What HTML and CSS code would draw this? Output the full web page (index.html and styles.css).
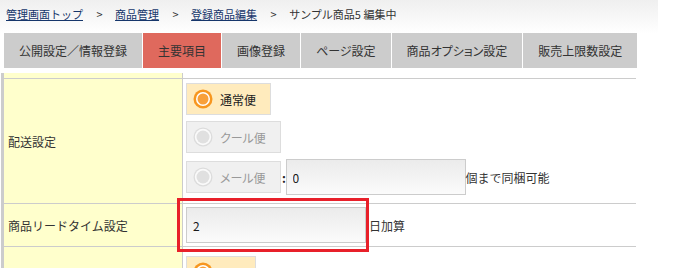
FILE: index.html
```html
<!DOCTYPE html>
<html lang="ja">
<head>
    <meta charset="UTF-8">
    <title>商品編集</title>
    <link rel="stylesheet" href="styles.css">
</head>
<body>
    <div class="page">
        <div class="crumbs">
            <a href="#">管理画面トップ</a>
            <span class="sep">&gt;</span>
            <a href="#">商品管理</a>
            <span class="sep">&gt;</span>
            <a href="#">登録商品編集</a>
            <span class="sep">&gt;</span>
            <span>サンプル商品5 編集中</span>
        </div>

        <ul class="tabs">
            <li>公開設定／情報登録</li>
            <li class="active">主要項目</li>
            <li>画像登録</li>
            <li>ページ設定</li>
            <li>商品オプション設定</li>
            <li>販売上限数設定</li>
        </ul>

        <table class="form">
            <tr class="spacer">
                <th></th>
                <td></td>
            </tr>
            <tr>
                <th>配送設定</th>
                <td class="ship">
                    <div class="line">
                        <label class="radio on">
                            <svg width="20" height="20" viewBox="0 0 20 20"><circle cx="10" cy="10" r="9.5" fill="#f7961f"/><circle cx="10" cy="10" r="7" fill="#fff"/><circle cx="10" cy="10" r="5.5" fill="#f8a03a"/></svg>
                            通常便
                        </label>
                    </div>
                    <div class="line">
                        <label class="radio off">
                            <svg width="20" height="20" viewBox="0 0 20 20"><circle cx="10" cy="10" r="9.5" fill="#dcdcdc"/><circle cx="10" cy="10" r="8.2" fill="#fafafa"/><circle cx="10" cy="10" r="6.5" fill="#e0e0e0"/></svg>
                            クール便
                        </label>
                    </div>
                    <div class="line">
                        <label class="radio off">
                            <svg width="20" height="20" viewBox="0 0 20 20"><circle cx="10" cy="10" r="9.5" fill="#dcdcdc"/><circle cx="10" cy="10" r="8.2" fill="#fafafa"/><circle cx="10" cy="10" r="6.5" fill="#e0e0e0"/></svg>
                            メール便
                        </label>
                        <span class="colon">:</span>
                        <input type="text" class="text count" value="0">
                        <span class="unit">個まで同梱可能</span>
                    </div>
                </td>
            </tr>
            <tr>
                <th>商品リードタイム設定</th>
                <td class="lead">
                    <div class="line">
                        <span class="mark"><input type="text" class="text" value="2"></span>
                        <span class="unit days">日加算</span>
                    </div>
                </td>
            </tr>
            <tr>
                <th></th>
                <td class="next">
                    <label class="radio on stub">
                        <svg width="20" height="20" viewBox="0 0 20 20"><circle cx="10" cy="10" r="9.5" fill="#f7961f"/><circle cx="10" cy="10" r="7" fill="#fff"/><circle cx="10" cy="10" r="5.5" fill="#f8a03a"/></svg>
                    </label>
                </td>
            </tr>
        </table>
    </div>
</body>
</html>
```

FILE: styles.css
```css
html, body {
    margin: 0;
    padding: 0;
    overflow: hidden;
    height: 268px;
}
body {
    font-family: "Noto Sans CJK JP", "Liberation Sans", sans-serif;
    font-size: 12px;
    color: #333;
    background: #fff;
}
.page {
    width: 658px;
    background: linear-gradient(#efefef, #fff 33px);
}
.crumbs {
    height: 29px;
    line-height: 28px;
    padding-left: 6px;
    font-size: 11px;
    color: #333;
    white-space: nowrap;
}
.crumbs a {
    color: #16366b;
    text-decoration: underline;
}
.crumbs .sep {
    margin: 0 10px 0 11px;
}
.tabs {
    display: flex;
    gap: 1px;
    list-style: none;
    margin: 4px 0 5px 4px;
    padding: 0;
}
.tabs li {
    height: 35px;
    line-height: 35px;
    padding: 0 15px;
    background: #ccc;
    color: #333;
    font-size: 12px;
    font-feature-settings: "palt";
    white-space: nowrap;
}
.tabs li.active {
    background: #df695d;
}
.form {
    width: 635px;
    margin-left: 1px;
    border-collapse: collapse;
    border-left: 3px solid #ccc;
}
.form th, .form td {
    border-bottom: 1px solid #ccc;
    padding: 0;
    vertical-align: middle;
}
.form th {
    width: 174px;
    padding-left: 4px;
    background: #ffffcc;
    border-right: 1px solid #ccc;
    font-weight: normal;
    text-align: left;
    color: #333;
}
.form tr:last-child th, .form tr:last-child td {
    border-bottom: none;
}
.spacer th, .spacer td {
    height: 5px;
}
.ship {
    padding: 4px 0 8px 3px !important;
}
.line {
    display: flex;
    align-items: center;
    margin-bottom: 6px;
}
.line:last-child {
    margin-bottom: 0;
}
.radio {
    display: inline-flex;
    align-items: center;
    gap: 7px;
    height: 30px;
    padding: 0 14px 0 6px;
    border: 1px solid #ddd;
    font-feature-settings: "palt";
}
.radio.on {
    background: #ffebbd;
    color: #222;
}
.radio.off {
    background: #f0f0f0;
    color: #999;
}
.radio.stub {
    width: 48px;
}
.colon {
    width: 7px;
    margin-right: -2px;
    text-align: center;
    font-weight: bold;
    color: #222;
}
.text {
    box-sizing: border-box;
    width: 180px;
    height: 36px;
    padding: 0 6px;
    border: 1px solid #ccc;
    background: linear-gradient(#ebebeb, #fbfbfb);
    font-family: inherit;
    font-size: 12px;
    color: #1a1a1a;
}
.unit {
    color: #333;
}
.lead {
    height: 42px;
    padding-left: 3px !important;
}
.mark {
    position: relative;
    display: block;
}
.mark .text {
    display: block;
}
.mark::after {
    content: "";
    position: absolute;
    left: -9px;
    right: -3px;
    top: -9px;
    bottom: -9px;
    border: 3px solid #e8202a;
}
.days {
    margin-left: 3px;
}
.next {
    padding: 9px 0 4px 3px !important;
    vertical-align: top !important;
}
```
